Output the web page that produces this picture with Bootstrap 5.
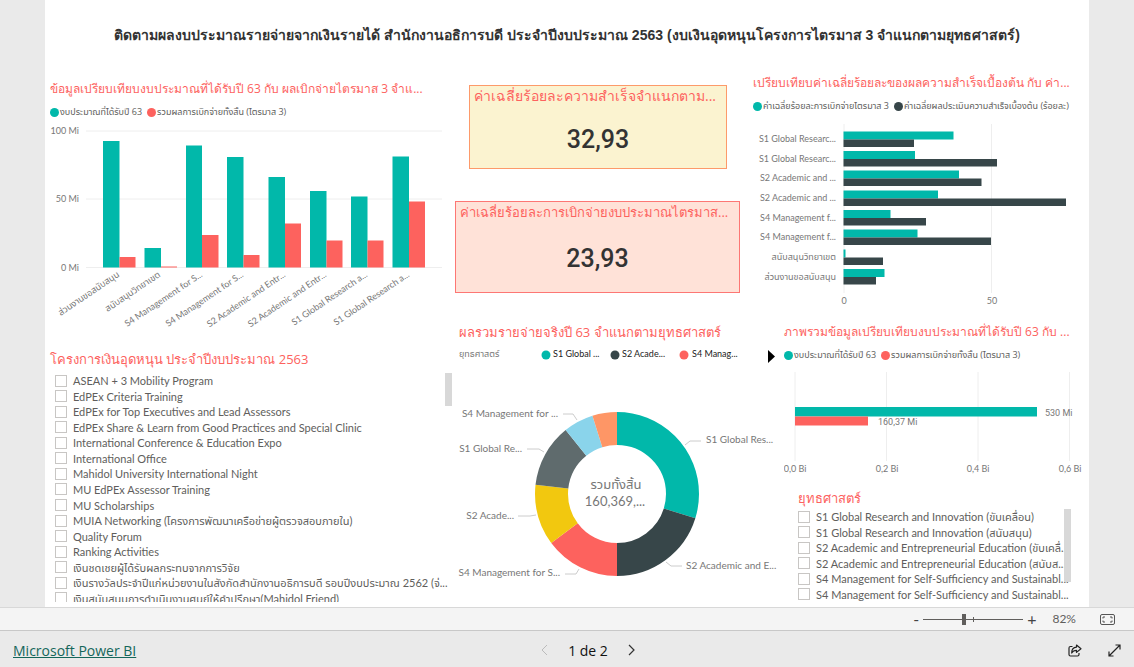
<!DOCTYPE html>
<html lang="th">
<head>
<meta charset="utf-8">
<meta name="viewport" content="width=device-width, initial-scale=1">
<title>Microsoft Power BI</title>
<link rel="stylesheet" href="https://cdn.jsdelivr.net/npm/bootstrap@5.3.0/dist/css/bootstrap.min.css">
<style>
body{font-family:Lato,"Noto Sans Thai",sans-serif;font-size:11px;background:#eaeaea;color:#605e5c}
.report-canvas{margin:0 45px;overflow:hidden}
.report-title{font:bold 14px/20px "Liberation Sans",sans-serif;color:#333;padding:25px 0 28px}
.report-grid{display:grid;grid-template-columns:405fr 634fr;padding-left:5px}
.top-grid{display:grid;grid-template-columns:290fr 344fr}
.bottom-grid{display:grid;grid-template-columns:329fr 305fr;padding-top:12px}
.report-grid>*,.top-grid>*,.bottom-grid>*{min-width:0}
.left-column{padding-top:6px}
.visual-title{font-family:"Open Sans",sans-serif;font-size:13px;line-height:20px;font-weight:400;color:#fd625e;margin:0;white-space:nowrap}
.title-sm{font-size:12px}
.legend-row{font-size:9px;line-height:18px;white-space:nowrap;gap:1px;font-family:"Open Sans","Noto Sans Thai",sans-serif}
.key-dot{width:9px;height:9px;border-radius:50%;flex:none}
.kpi-column{padding:12px 5px 0 0}
.kpi{border:1px solid #fd9a6a;background:#fbf3d0;padding:0 4px}
.kpi-a{margin:0 13px 32px 14px}
.kpi-a .visual-title{font-size:14px}
.kpi-b{border-color:#fd7774;background:#ffe2d8}
.kpi-value{font:500 25px/30px Roboto,sans-serif;color:#333;padding:19px 0 13px}
.kpi-b .kpi-value{padding:22px 0 18px}
.chart{display:block;width:100%;height:auto}
.chart text{font-size:9px;fill:#777}
.chart .callouts text{font-size:10px}
.chart .total text{font-size:13px}
.chart .keys text{fill:#222}
.slicer{overflow:hidden}
.slicer label{line-height:15px;height:15px;white-space:nowrap;gap:6px}
.slicer input{appearance:none;width:12px;height:12px;border:1px solid #c8c6c4;background:#fff;margin:0;flex:none}
.slicer-a{height:229px;margin-top:4px;padding-left:5px}.slicer-a>div{height:233px}
.slicer-b{margin-top:1px}.slicer-b>div{height:93px}
.strategy{padding-left:14px}
.scroll-thumb{width:7px;background:#d8d8d8;right:3px;top:0}
.slicer-b .scroll-thumb{right:18px}
.zoom-bar{height:24px;background:#f4f4f4;border-top:1px solid #d8d8d8;border-bottom:1px solid #c8c8c8;padding-right:19px;font-size:12px}
.zoom-bar button,.page-bar button{border:0;background:none;padding:0;color:#444;line-height:16px}
.zoom-range{appearance:none;width:100px;height:13px;background:linear-gradient(#605e5c,#605e5c) 50px 50%/1px 5px no-repeat,linear-gradient(#605e5c,#605e5c) 0 50%/100% 1px no-repeat}
.zoom-range::-webkit-slider-thumb{appearance:none;width:4px;height:11px;background:#605e5c}
.page-bar{height:36px;padding:2px 13px 0;display:grid;grid-template-columns:1fr auto 1fr;font:14px "Open Sans",sans-serif}
.page-bar a{color:#14665a}
.page-nav{gap:20px;padding-left:42px;color:#111}
.page-tools{gap:26px}
</style>
</head>
<body class="d-flex flex-column min-vh-100">
<main class="report-canvas bg-white flex-grow-1">
  <h1 class="report-title text-center text-nowrap m-0">ติดตามผลงบประมาณรายจ่ายจากเงินรายได้ สำนักงานอธิการบดี ประจำปีงบประมาณ 2563 (งบเงินอุดหนุนโครงการไตรมาส 3 จำแนกตามยุทธศาสตร์)</h1>
  <div class="report-grid">
    <div class="left-column">
      <section>
        <h2 class="visual-title title-sm">ข้อมูลเปรียบเทียบงบประมาณที่ได้รับปี 63 กับ ผลเบิกจ่ายไตรมาส 3 จำแ...</h2>
        <div class="legend-row d-flex align-items-center pt-1">
          <span class="key-dot" style="background:#01b8aa"></span><span>งบประมาณที่ได้รับปี 63</span>
          <span class="key-dot ms-1" style="background:#fd625e"></span><span>รวมผลการเบิกจ่ายทั้งสิ้น (ไตรมาส 3)</span>
        </div>
        <svg class="chart" viewBox="50 121 405 224" role="img" aria-label="Budget by strategy">
          <path d="M86 131H442M86 199H442M86 267.500H442" stroke="#eee"/>
          <g text-anchor="end"><text x="79" y="134">100 Mi</text><text x="79" y="202">50 Mi</text><text x="79" y="271">0 Mi</text></g>
          <path fill="#01b8aa" d="M103 141h16.500V267.500h-16.500zM144.500 248h16.500v19.500h-16.500zM186 145.500h16V267.500h-16zM227 157h16.500V267.500H227zM268.500 177H285v90.500h-16.500zM310 191h16.500v76.500H310zM351 196.500h16.500v71H351zM392.500 156.500H409v111h-16.500z"/>
          <path fill="#fd625e" d="M119.500 257h16v10.500h-16zM161 266.500h16v1h-16zM202 235h16.500v32.500H202zM243.500 255h16v12.500h-16zM285 223.500h16v44h-16zM326.500 240.500h16v27h-16zM367.500 240.500h16v27h-16zM409 201.500h16v66h-16z"/>
          <g text-anchor="end">
            <text transform="translate(120 276) rotate(-34)">ส่วนงานขอสนับสนุน</text>
            <text transform="translate(161 276) rotate(-34)">สนับสนุนวิทยาเขต</text>
            <text transform="translate(203 276) rotate(-34)">S4 Management for S...</text>
            <text transform="translate(244 276) rotate(-34)">S4 Management for S...</text>
            <text transform="translate(286 276) rotate(-34)">S2 Academic and Entr...</text>
            <text transform="translate(327 276) rotate(-34)">S2 Academic and Entr...</text>
            <text transform="translate(368 276) rotate(-34)">S1 Global Research a...</text>
            <text transform="translate(410 276) rotate(-34)">S1 Global Research a...</text>
          </g>
        </svg>
      </section>
      <section class="pt-1">
        <h2 class="visual-title">โครงการเงินอุดหนุน ประจำปีงบประมาณ 2563</h2>
        <div class="slicer slicer-a position-relative">
          <div class="d-flex flex-column justify-content-between">
            <label class="d-flex align-items-center"><input type="checkbox">ASEAN + 3 Mobility Program</label>
            <label class="d-flex align-items-center"><input type="checkbox">EdPEx Criteria Training</label>
            <label class="d-flex align-items-center"><input type="checkbox">EdPEx for Top Executives and Lead Assessors</label>
            <label class="d-flex align-items-center"><input type="checkbox">EdPEx Share &amp; Learn from Good Practices and Special Clinic</label>
            <label class="d-flex align-items-center"><input type="checkbox">International Conference &amp; Education Expo</label>
            <label class="d-flex align-items-center"><input type="checkbox">International Office</label>
            <label class="d-flex align-items-center"><input type="checkbox">Mahidol University International Night</label>
            <label class="d-flex align-items-center"><input type="checkbox">MU EdPEx Assessor Training</label>
            <label class="d-flex align-items-center"><input type="checkbox">MU Scholarships</label>
            <label class="d-flex align-items-center"><input type="checkbox">MUIA Networking (โครงการพัฒนาเครือข่ายผู้ตรวจสอบภายใน)</label>
            <label class="d-flex align-items-center"><input type="checkbox">Quality Forum</label>
            <label class="d-flex align-items-center"><input type="checkbox">Ranking Activities</label>
            <label class="d-flex align-items-center"><input type="checkbox">เงินชดเชยผู้ได้รับผลกระทบจากการวิจัย</label>
            <label class="d-flex align-items-center"><input type="checkbox">เงินรางวัลประจำปีแก่หน่วยงานในสังกัดสำนักงานอธิการบดี รอบปีงบประมาณ 2562 (จ่...</label>
            <label class="d-flex align-items-center"><input type="checkbox">เงินสนับสนุนการดำเนินงานศูนย์ให้คำปรึกษา(Mahidol Friend)</label>
          </div>
          <span class="scroll-thumb position-absolute" style="height:33px"></span>
        </div>
      </section>
    </div>
    <div>
      <div class="top-grid">
        <div class="kpi-column">
          <section class="kpi kpi-a">
            <h2 class="visual-title">ค่าเฉลี่ยร้อยละความสำเร็จจำแนกตาม...</h2>
            <div class="kpi-value text-center">32,93</div>
          </section>
          <section class="kpi kpi-b">
            <h2 class="visual-title">ค่าเฉลี่ยร้อยละการเบิกจ่ายงบประมาณไตรมาส...</h2>
            <div class="kpi-value text-center">23,93</div>
          </section>
        </div>
        <section>
          <h2 class="visual-title title-sm ps-2">เปรียบเทียบค่าเฉลี่ยร้อยละของผลความสำเร็จเบื้องต้น กับ ค่า...</h2>
          <div class="legend-row d-flex align-items-center ps-2 pt-1">
            <span class="key-dot" style="background:#01b8aa"></span><span>ค่าเฉลี่ยร้อยละการเบิกจ่ายไตรมาส 3</span>
            <span class="key-dot ms-1" style="background:#374649"></span><span>ค่าเฉลี่ยผลประเมินความสำเร็จเบื้องต้น (ร้อยละ)</span>
          </div>
          <svg class="chart" viewBox="745 115 344 195" role="img" aria-label="Average percentages by strategy">
            <path d="M844 124V293M991.500 124V293" stroke="#eee"/>
            <path fill="#01b8aa" d="M843.500 131.500H953.500v8H843.500zM843.500 151H915v8h-71.500zM843.500 170.500H959v8H843.500zM843.500 190.500H938v8h-94.500zM843.500 210H890.500v8h-47zM843.500 229.500H917.500v8h-74zM843.500 249.500h2v8h-2zM843.500 269H884.500v8h-41z"/>
            <path fill="#374649" d="M843.500 139.500H914v7.500h-70.500zM843.500 159H997v7.500H843.500zM843.500 178.500H981.500v7.500h-138zM843.500 198.500H1066v7.500H843.500zM843.500 218H926v7.500h-82.500zM843.500 237.500H991v7.500H843.500zM843.500 257.500H883v7.500h-39.500zM843.500 277H876v7.500h-32.500z"/>
            <g text-anchor="end"><text x="836" y="142">S1 Global Researc...</text><text x="836" y="162">S1 Global Researc...</text><text x="836" y="181">S2 Academic and ...</text><text x="836" y="201">S2 Academic and ...</text><text x="836" y="221">S4 Management f...</text><text x="836" y="240">S4 Management f...</text><text x="836" y="260">สนับสนุนวิทยาเขต</text><text x="836" y="280">ส่วนงานขอสนับสนุน</text></g>
            <g text-anchor="middle"><text x="844" y="304">0</text><text x="992" y="304">50</text></g>
          </svg>
        </section>
      </div>
      <div class="bottom-grid">
        <section>
          <h2 class="visual-title ps-1">ผลรวมรายจ่ายจริงปี 63 จำแนกตามยุทธศาสตร์</h2>
          <svg class="chart" viewBox="455 342 329 262" role="img" aria-label="Spending by strategy">
            <text x="459" y="357">ยุทธศาสตร์</text>
            <circle cx="546" cy="355" r="4.500" fill="#01b8aa"/><circle cx="615" cy="355" r="4.500" fill="#374649"/><circle cx="684" cy="355" r="4.500" fill="#fd625e"/>
            <g class="keys"><text x="553" y="357">S1 Global ...</text><text x="622" y="357">S2 Acade...</text><text x="692" y="357">S4 Manag...</text></g>
            <path d="M768 350l7 6.500-7 6.500z"/>
            <g fill="none" stroke-width="33" transform="rotate(-90 617 494)">
              <circle cx="617" cy="494" r="65.500" stroke="#01b8aa" pathLength="360" stroke-dasharray="107.300 360"/>
              <circle cx="617" cy="494" r="65.500" stroke="#374649" pathLength="360" stroke-dasharray="72.700 360" stroke-dashoffset="-107.300"/>
              <circle cx="617" cy="494" r="65.500" stroke="#fd625e" pathLength="360" stroke-dasharray="53.300 360" stroke-dashoffset="-180"/>
              <circle cx="617" cy="494" r="65.500" stroke="#f2c80f" pathLength="360" stroke-dasharray="43.200 360" stroke-dashoffset="-233.300"/>
              <circle cx="617" cy="494" r="65.500" stroke="#5f6b6d" pathLength="360" stroke-dasharray="44.700 360" stroke-dashoffset="-276.500"/>
              <circle cx="617" cy="494" r="65.500" stroke="#8ad4eb" pathLength="360" stroke-dasharray="21.300 360" stroke-dashoffset="-321.200"/>
              <circle cx="617" cy="494" r="65.500" stroke="#fe9666" pathLength="360" stroke-dasharray="17.500 360" stroke-dashoffset="-342.500"/>
            </g>
            <path fill="none" stroke="#ccc" d="M563 414h10l4 6M527 449h12l5 3M518 516h12l6-1M565 574h11l3-5M685 445l5-4h11M666 562l5 4h11"/>
            <g class="callouts">
              <g text-anchor="end"><text x="558" y="417">S4 Management for ...</text><text x="522" y="452">S1 Global Re...</text><text x="514" y="519">S2 Acade...</text><text x="560" y="576">S4 Management for S...</text></g>
              <text x="706" y="443">S1 Global Res...</text><text x="686" y="569">S2 Academic and E...</text>
            </g>
            <g class="total" text-anchor="middle"><text x="616" y="489">รวมทั้งสิ้น</text><text x="615" y="506">160,369,...</text></g>
          </svg>
        </section>
        <div>
          <section>
            <h2 class="visual-title title-sm">ภาพรวมข้อมูลเปรียบเทียบงบประมาณที่ได้รับปี 63 กับ ...</h2>
            <div class="legend-row d-flex align-items-center pt-1">
              <span class="key-dot" style="background:#01b8aa"></span><span>งบประมาณที่ได้รับปี 63</span>
              <span class="key-dot ms-1" style="background:#fd625e"></span><span>รวมผลการเบิกจ่ายทั้งสิ้น (ไตรมาส 3)</span>
            </div>
            <svg class="chart" viewBox="784 364 305 124" role="img" aria-label="Total budget and spending">
              <path d="M795 372V461M886.500 372V461M978 372V461M1069.500 372V461" stroke="#eee"/>
              <path fill="#01b8aa" d="M795 407h242v9.500H795z"/><path fill="#fd625e" d="M795 416.500h73v9h-73z"/>
              <g font-family="Roboto,sans-serif"><text x="1045" y="416">530 Mi</text><text x="878" y="425">160,37 Mi</text></g>
              <g text-anchor="middle"><text x="795" y="472">0,0 Bi</text><text x="887" y="472">0,2 Bi</text><text x="978" y="472">0,4 Bi</text><text x="1070" y="472">0,6 Bi</text></g>
            </svg>
          </section>
          <section class="strategy">
            <h2 class="visual-title">ยุทธศาสตร์</h2>
            <div class="slicer slicer-b position-relative">
              <div class="d-flex flex-column justify-content-between">
                <label class="d-flex align-items-center"><input type="checkbox">S1 Global Research and Innovation (ขับเคลื่อน)</label>
                <label class="d-flex align-items-center"><input type="checkbox">S1 Global Research and Innovation (สนับสนุน)</label>
                <label class="d-flex align-items-center"><input type="checkbox">S2 Academic and Entrepreneurial Education (ขับเคลื่...</label>
                <label class="d-flex align-items-center"><input type="checkbox">S2 Academic and Entrepreneurial Education (สนับส...</label>
                <label class="d-flex align-items-center"><input type="checkbox">S4 Management for Self-Sufficiency and Sustainabl...</label>
                <label class="d-flex align-items-center"><input type="checkbox">S4 Management for Self-Sufficiency and Sustainabl...</label>
              </div>
              <span class="scroll-thumb position-absolute" style="height:73px"></span>
            </div>
          </section>
        </div>
      </div>
    </div>
  </div>
</main>
<div class="zoom-bar d-flex align-items-center justify-content-end">
  <button type="button" aria-label="Zoom out" class="fs-6">-</button>
  <input class="zoom-range mx-1" type="range" min="0" max="100" value="40" aria-label="Zoom">
  <button type="button" aria-label="Zoom in" class="fs-6">+</button>
  <span class="ms-3 me-4">82%</span>
  <button type="button" aria-label="Fit to page" class="d-flex"><svg width="15" height="11" viewBox="0 0 15 11" fill="none" stroke="#555"><rect x=".5" y=".5" width="14" height="10" rx="1.500"/><path d="M5 3H3v1.500M10 3h2v1.500M5 8H3v-1.500M10 8h2v-1.500"/></svg></button>
</div>
<footer class="page-bar align-items-center">
  <a href="#">Microsoft Power BI</a>
  <nav class="page-nav d-flex align-items-center" aria-label="Pages">
    <button type="button" aria-label="Previous page" class="d-flex" disabled><svg width="7" height="12" viewBox="0 0 7 12" fill="none" stroke="#bbb"><path d="M6 1 1 6l5 5"/></svg></button>
    <span>1 de 2</span>
    <button type="button" aria-label="Next page" class="d-flex"><svg width="7" height="12" viewBox="0 0 7 12" fill="none" stroke="#333" stroke-width="1.200"><path d="m1 1 5 5-5 5"/></svg></button>
  </nav>
  <div class="page-tools d-flex justify-content-end align-items-center">
    <button type="button" aria-label="Share" class="d-flex"><svg width="14" height="13" viewBox="0 0 14 13" fill="none" stroke="#222" stroke-width="1.200" stroke-linejoin="round"><path d="M4.500 2.500H2.500Q1 2.500 1 4v6.500Q1 12 2.500 12h7q1.500 0 1.500-1.500V9M8.500 1 13 4.700 8.500 8.400V6.300C6 6.300 4.700 7.200 3.700 9 3.700 5.700 5.500 3.300 8.500 3.100z"/></svg></button>
    <button type="button" aria-label="Full screen" class="d-flex"><svg width="13" height="13" viewBox="0 0 13 13" fill="none" stroke="#222" stroke-width="1.200"><path d="M1 12 12 1M7.500 1H12v4.500M1 7.500V12h4.500"/></svg></button>
  </div>
</footer>
<script src="https://cdn.jsdelivr.net/npm/bootstrap@5.3.0/dist/js/bootstrap.bundle.min.js"></script>
</body>
</html>
